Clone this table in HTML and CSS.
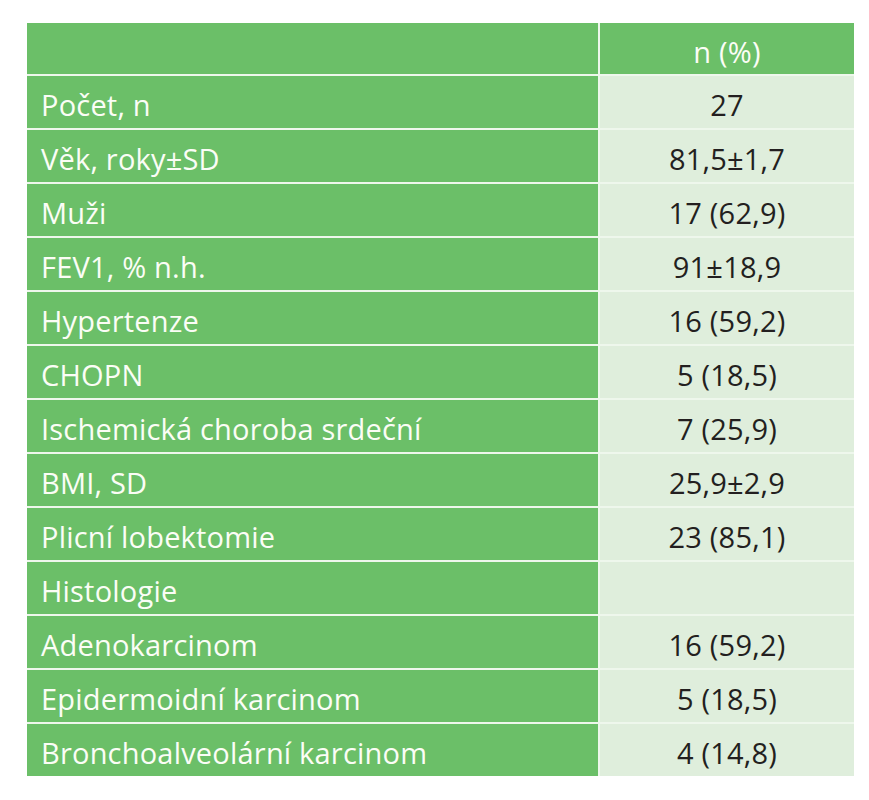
FILE: index.html
```html
<!DOCTYPE html>
<html>
<head>
<meta charset="utf-8">
<link rel="stylesheet" href="styles.css">
</head>
<body>
<div class="table">
  <div class="cell head left"></div>
  <div class="cell head right">n (%)</div>
  <div class="cell left">Počet, n</div><div class="cell right">27</div>
  <div class="cell left">Věk, roky±SD</div><div class="cell right">81,5±1,7</div>
  <div class="cell left">Muži</div><div class="cell right">17 (62,9)</div>
  <div class="cell left">FEV1, % n.h.</div><div class="cell right">91±18,9</div>
  <div class="cell left">Hypertenze</div><div class="cell right">16 (59,2)</div>
  <div class="cell left">CHOPN</div><div class="cell right">5 (18,5)</div>
  <div class="cell left">Ischemická choroba srdeční</div><div class="cell right">7 (25,9)</div>
  <div class="cell left">BMI, SD</div><div class="cell right">25,9±2,9</div>
  <div class="cell left">Plicní lobektomie</div><div class="cell right">23 (85,1)</div>
  <div class="cell left">Histologie</div><div class="cell right"></div>
  <div class="cell left">Adenokarcinom</div><div class="cell right">16 (59,2)</div>
  <div class="cell left">Epidermoidní karcinom</div><div class="cell right">5 (18,5)</div>
  <div class="cell left">Bronchoalveolární karcinom</div><div class="cell right">4 (14,8)</div>
</div>
</body>
</html>
```
FILE: styles.css
```css
html, body {
  margin: 0;
  padding: 0;
  background: #ffffff;
}
body {
  padding: 23px 0 0 27px;
  font-family: "Open Sans", "Noto Sans", sans-serif;
}
.table {
  display: grid;
  grid-template-columns: 571px 254px;
  grid-template-rows: 51px repeat(13, 52px);
  gap: 2px;
  width: 827px;
  background: #eef7ec;
}
.cell {
  display: flex;
  align-items: center;
  font-size: 29px;
  font-weight: 500;
  line-height: 1;
  padding-top: 5px;
  letter-spacing: 0.2px;
}
.left {
  background: #6bbf68;
  color: #fbfdf6;
  padding-left: 14px;
}
.right {
  background: #dfeedc;
  color: #231f20;
  justify-content: center;
}
.head {
  background: #6bbf68;
  color: #fbfdf6;
}
```
